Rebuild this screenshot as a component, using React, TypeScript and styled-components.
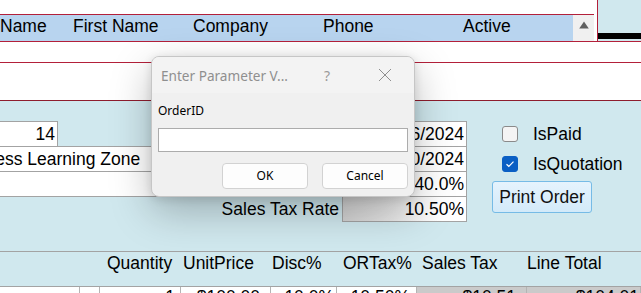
import React from 'react';
import styled, { createGlobalStyle } from 'styled-components';

const RED = '#b3203a';
const DARK_RED = '#8e1d2e';
const HEAD_BLUE = '#b8d4ef';
const PANEL = '#d0e8ee';
const GRID = '#a3a3a3';

const Global = createGlobalStyle`
  * { box-sizing: border-box; }
  html, body { margin: 0; padding: 0; background: #fff; overflow: hidden; }
`;

const Screen = styled.div`
  position: relative;
  width: 641px;
  height: 293px;
  overflow: hidden;
  font-family: "Liberation Sans", Arial, sans-serif;
  font-size: 17.5px;
  color: #000;
  background: #fff;
`;

/* ---------- top datasheet strip ---------- */
const TopStrip = styled.div`
  display: flex;
  height: 42px;
  border-bottom: 1px solid ${RED};
`;

const SheetArea = styled.div`
  width: 598px;
  flex: none;
  padding-top: 14px;
  border-right: 1px solid ${RED};
  background: #fff;
`;

const SheetHeader = styled.div`
  display: flex;
  width: 594px;
  height: 27px;
  border-top: 1px solid ${RED};
  background: ${HEAD_BLUE};
`;

const SheetHeadCell = styled.div<{ $w: number; $pad?: number }>`
  flex: none;
  width: ${p => p.$w}px;
  padding-left: ${p => p.$pad ?? 0}px;
  padding-top: 1px;
  line-height: 20px;
  white-space: nowrap;
`;

const ScrollUp = styled.div`
  flex: none;
  width: 21px;
  display: flex;
  justify-content: center;
  padding-top: 6px;
  background: #f0f0f0;
`;

const SidePanel = styled.div`
  flex: 1;
  padding-top: 33px;
  background: ${PANEL};
`;

const BlackBar = styled.div`
  height: 6px;
  background: #000;
`;

const Band = styled.div<{ $h: number; $line: string }>`
  height: ${p => p.$h}px;
  border-bottom: 1px solid ${p => p.$line};
  background: #fff;
`;

/* ---------- detail section ---------- */
const Detail = styled.div`
  display: flex;
  height: 151px;
  padding-top: 20px;
  background: ${PANEL};
  border-bottom: 1px solid ${GRID};
`;

const LeftFields = styled.div`
  flex: none;
  display: flex;
  flex-direction: column;
  width: 200px;
  margin-left: -40px;
`;

const Field = styled.div<{ $w: number; $right?: boolean; $shade?: boolean }>`
  flex: none;
  width: ${p => p.$w}px;
  height: 26px;
  border: 1px solid ${GRID};
  background: ${p => (p.$shade ? 'linear-gradient(to right, #d2d2d2, #ffffff 80%)' : '#fff')};
  line-height: 24px;
  padding: 0 2px 0 5px;
  text-align: ${p => (p.$right ? 'right' : 'left')};
  white-space: nowrap;
  overflow: hidden;
  & + & { margin-top: -1px; }
`;

const RightFields = styled.div`
  flex: none;
  display: flex;
  flex-direction: column;
`;

const FieldRow = styled.div`
  display: flex;
  gap: 3px;
  height: 26px;
  & + & { margin-top: -1px; }
`;

const FieldLabel = styled.div`
  width: 179px;
  text-align: right;
  line-height: 26px;
  white-space: nowrap;
`;

const Checks = styled.div`
  flex: none;
  display: flex;
  flex-direction: column;
  margin-left: 25px;
  margin-top: -2px;
`;

const CheckRow = styled.div`
  display: flex;
  align-items: center;
  gap: 15px;
  height: 30px;
  padding-left: 10px;
`;

const CheckBox = styled.div<{ $on?: boolean }>`
  width: 16px;
  height: 16px;
  border-radius: 3px;
  border: 1px solid ${p => (p.$on ? '#0a5fc4' : '#8a8a8a')};
  background: ${p => (p.$on ? '#0a5fc4' : '#f4f4f4')};
  display: flex;
  align-items: center;
  justify-content: center;
`;

const PrintButton = styled.div`
  margin-top: 2px;
  width: 100px;
  height: 32px;
  border: 1px solid #76bbe6;
  border-radius: 3px;
  background: linear-gradient(#e5f3fd, #d3eaf9);
  line-height: 30px;
  text-align: center;
  color: #111;
`;

/* ---------- lines header / row ---------- */
const LinesHeader = styled.div`
  display: flex;
  height: 35px;
  background: ${PANEL};
  border-bottom: 1px solid ${GRID};
`;

const LinesHeadCell = styled.div<{ $w: number; $pad: number }>`
  flex: none;
  width: ${p => p.$w}px;
  padding-left: ${p => p.$pad}px;
  padding-top: 1px;
  line-height: 20px;
  white-space: nowrap;
`;

const DataRow = styled.div`
  display: flex;
  height: 26px;
`;

const DataCell = styled.div<{ $w: number; $gray?: boolean; $pad: number }>`
  flex: none;
  width: ${p => p.$w}px;
  border-right: 1px solid #b4b4b4;
  background: ${p => (p.$gray ? '#cacaca' : '#fff')};
  padding-right: ${p => p.$pad}px;
  text-align: right;
  line-height: 21px;
  white-space: nowrap;
  overflow: hidden;
`;

/* ---------- dialog ---------- */
const Dialog = styled.div`
  position: absolute;
  left: 151px;
  top: 56px;
  width: 264px;
  height: 141px;
  border: 1px solid #c6c6c6;
  border-radius: 8px;
  background: #f0f0f0;
  box-shadow: 0 14px 40px rgba(0, 0, 0, 0.26), 0 2px 10px rgba(0, 0, 0, 0.12);
  font-family: "Noto Sans", "Open Sans", sans-serif;
  font-size: 12px;
  color: #000;
  overflow: hidden;
`;

const TitleBar = styled.div`
  display: flex;
  align-items: center;
  gap: 12px;
  height: 36px;
  padding: 0 6px 0 9px;
  background: #f3f3f3;
`;

const TitleText = styled.div`
  flex: 1;
  color: #8f8f8f;
  font-size: 13.6px;
  white-space: nowrap;
`;

const TitleButton = styled.div`
  width: 46px;
  display: flex;
  justify-content: center;
  align-items: center;
  color: #9a9a9a;
  font-size: 14px;
`;

const DialogBody = styled.div`
  padding: 10px 6px 0 6px;
`;

const ParamLabel = styled.div`
  line-height: 16px;
`;

const ParamInput = styled.div`
  margin-top: 9px;
  height: 24px;
  border: 1px solid #acacac;
  background: #fff;
`;

const ButtonRow = styled.div`
  display: flex;
  justify-content: flex-end;
  gap: 14px;
  margin-top: 11px;
`;

const DlgButton = styled.div`
  width: 86px;
  height: 26px;
  border: 1px solid #d2d2d2;
  border-radius: 4px;
  background: #fdfdfd;
  line-height: 24px;
  text-align: center;
`;

const sheetCols = [
  { label: 'Name', w: 73, pad: 0 },
  { label: 'First Name', w: 120, pad: 0 },
  { label: 'Company', w: 130, pad: 0 },
  { label: 'Phone', w: 140, pad: 0 },
  { label: 'Active', w: 110, pad: 0 },
];

const lineCols = [
  { label: '', w: 100, pad: 0 },
  { label: 'Quantity', w: 81, pad: 7 },
  { label: 'UnitPrice', w: 90, pad: 2 },
  { label: 'Disc%', w: 66, pad: 1 },
  { label: 'ORTax%', w: 80, pad: 6 },
  { label: 'Sales Tax', w: 110, pad: 5 },
  { label: 'Line Total', w: 114, pad: 0 },
];

const rowCells = [
  { v: '', w: 80, pad: 0 },
  { v: '', w: 20, pad: 0 },
  { v: '1', w: 81, pad: 5 },
  { v: '$100.00', w: 90, pad: 10 },
  { v: '10.0%', w: 66, pad: 2 },
  { v: '10.50%', w: 80, pad: 6 },
  { v: '$10.51', w: 110, pad: 10, gray: true },
  { v: '$104.01', w: 114, pad: 1, gray: true },
];

const rightFields = [
  { label: 'Order Date', value: '1/16/2024' },
  { label: 'Due Date', value: '1/30/2024' },
  { label: 'Discount', value: '40.0%' },
  { label: 'Sales Tax Rate', value: '10.50%', shade: true },
];

export default function App() {
  return (
    <Screen>
      <Global />
      <TopStrip>
        <SheetArea>
          <SheetHeader>
            {sheetCols.map(c => (
              <SheetHeadCell key={c.label} $w={c.w} $pad={c.pad}>
                {c.label}
              </SheetHeadCell>
            ))}
            <ScrollUp>
              <svg width="10" height="8" viewBox="0 0 10 8">
                <path d="M5 0.5 L9.8 7.5 L0.2 7.5 Z" fill="#606060" />
              </svg>
            </ScrollUp>
          </SheetHeader>
        </SheetArea>
        <SidePanel>
          <BlackBar />
        </SidePanel>
      </TopStrip>
      <Band $h={21} $line={RED} />
      <Band $h={38} $line={DARK_RED} />

      <Detail>
        <LeftFields>
          <Field $w={98} $right>14</Field>
          <Field $w={200}>Access Learning Zone</Field>
          <Field $w={200} />
        </LeftFields>
        <RightFields>
          {rightFields.map(f => (
            <FieldRow key={f.label}>
              <FieldLabel>{f.label}</FieldLabel>
              <Field $w={125} $right $shade={f.shade}>
                {f.value}
              </Field>
            </FieldRow>
          ))}
        </RightFields>
        <Checks>
          <CheckRow>
            <CheckBox />
            <span>IsPaid</span>
          </CheckRow>
          <CheckRow>
            <CheckBox $on>
              <svg width="10" height="8" viewBox="0 0 10 8">
                <path d="M1.5 4.2 L3.8 6.3 L8.5 1.6" stroke="#fff" strokeWidth="1.2" fill="none" />
              </svg>
            </CheckBox>
            <span>IsQuotation</span>
          </CheckRow>
          <PrintButton>Print Order</PrintButton>
        </Checks>
      </Detail>

      <LinesHeader>
        {lineCols.map((c, i) => (
          <LinesHeadCell key={i} $w={c.w} $pad={c.pad}>
            {c.label}
          </LinesHeadCell>
        ))}
      </LinesHeader>
      <DataRow>
        {rowCells.map((c, i) => (
          <DataCell key={i} $w={c.w} $pad={c.pad} $gray={c.gray}>
            {c.v}
          </DataCell>
        ))}
      </DataRow>

      <Dialog>
        <TitleBar>
          <TitleText>Enter Parameter V...</TitleText>
          <TitleButton>?</TitleButton>
          <TitleButton>
            <svg width="14" height="14" viewBox="0 0 14 14">
              <path d="M1 1 L13 13 M13 1 L1 13" stroke="#8f8f8f" strokeWidth="1" fill="none" />
            </svg>
          </TitleButton>
        </TitleBar>
        <DialogBody>
          <ParamLabel>OrderID</ParamLabel>
          <ParamInput />
          <ButtonRow>
            <DlgButton>OK</DlgButton>
            <DlgButton>Cancel</DlgButton>
          </ButtonRow>
        </DialogBody>
      </Dialog>
    </Screen>
  );
}
